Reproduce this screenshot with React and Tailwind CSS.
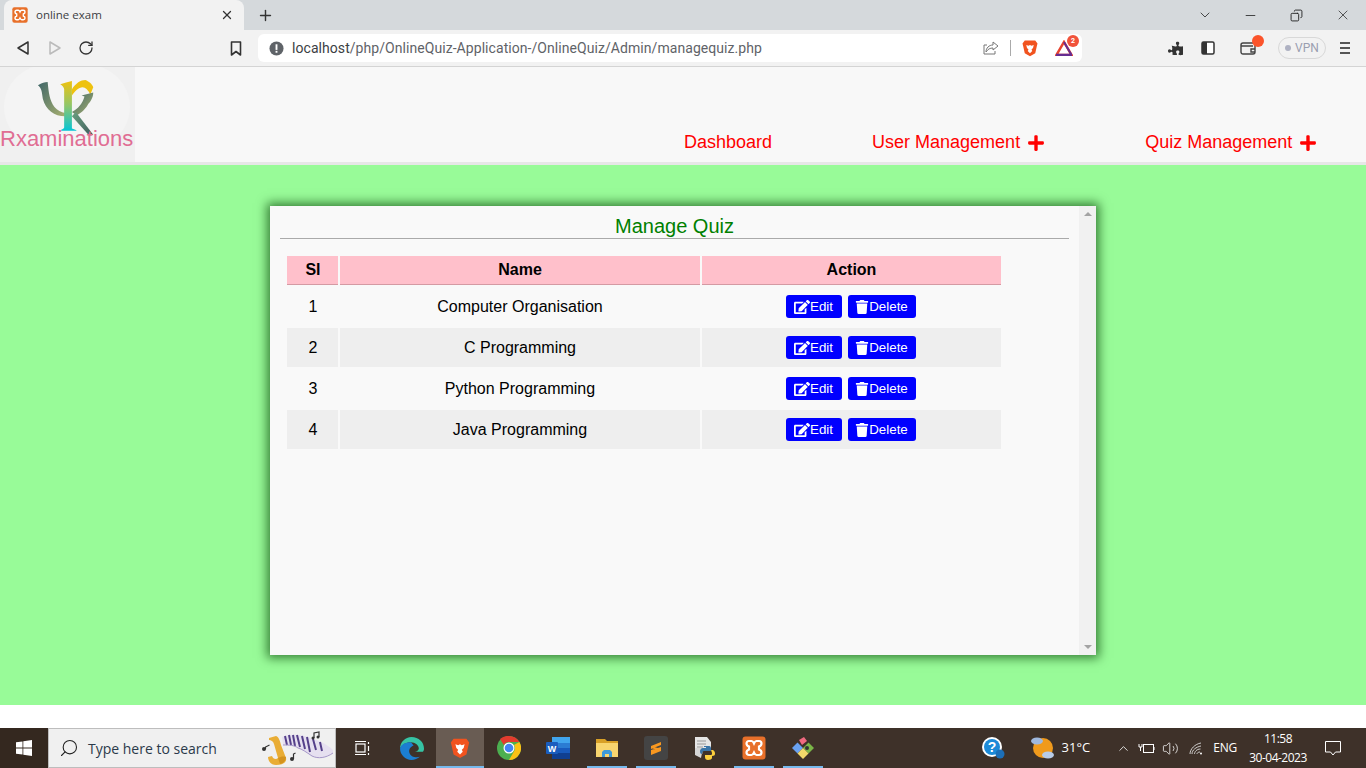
import { ChevronDown, ChevronUp, Copy, Minus, Plus, RotateCw, Search, Volume2, X } from 'lucide-react'
import { FaEdit, FaPlus, FaPuzzlePiece, FaTrash } from 'react-icons/fa'

const quizzes = ['Computer Organisation', 'C Programming', 'Python Programming', 'Java Programming']

function XamppIcon({ size = 16 }) {
  return (
    <svg width={size} height={size} viewBox="0 0 24 24">
      <rect x="0.5" y="0.5" width="23" height="23" rx="3" fill="#e8702a" />
      <path d="M7 5h2.5c1.5 0 2 1.5 2.5 2.5C12.500 6.500 13 5 14.500 5H17c1.500 0 2.500 1 2.500 2.500S18.500 10 17 10.500v3c1.500.5 2.500 1.500 2.500 3S18.500 19 17 19h-2.500c-1.500 0-2-1.500-2.500-2.500-.5 1-1 2.500-2.500 2.500H7c-1.500 0-2.500-1-2.500-2.500s1-2.500 2.500-3v-3C5.500 10 4.500 9 4.500 7.500S5.500 5 7 5z" fill="none" stroke="#fff" strokeWidth="2.200" />
    </svg>
  )
}

function BraveIcon({ size = 18 }) {
  return (
    <svg width={size} height={size} viewBox="0 0 24 24">
      <path d="M5 2h14l3 4-1 4-2 9-7 4-7-4-2-9-1-4z" fill="#f1531f" />
      <path d="M7 8l3 1 2-1 2 1 3-1-1 4-2 2 1 2-3 3-3-3 1-2-2-2z" fill="#fff" />
    </svg>
  )
}

function LogoMark() {
  return (
    <svg width="64" height="62" viewBox="0 0 66 60" preserveAspectRatio="none" className="block">
      <defs>
        <linearGradient id="logoLeft" x1="0" y1="0" x2="1" y2="1">
          <stop offset="0" stopColor="#3f6668" />
          <stop offset="1" stopColor="#a8b070" />
        </linearGradient>
        <linearGradient id="logoStem" x1="0" y1="0" x2="0" y2="1">
          <stop offset="0" stopColor="#eec20f" />
          <stop offset="0.5" stopColor="#8ec66c" />
          <stop offset="1" stopColor="#05c4d6" />
        </linearGradient>
        <linearGradient id="logoLeg" x1="0" y1="0" x2="1" y2="1">
          <stop offset="0" stopColor="#6aa080" />
          <stop offset="1" stopColor="#3f5c5c" />
        </linearGradient>
      </defs>
      <path d="M1 6c4-2 7-3 10-3 1 10 2 18 7 24 3 3 7 5 11 6v3C18 36 9 30 6 19 5 13 5 9 1 6z" fill="url(#logoLeft)" />
      <path d="M24 5c4-1 8-2 12-3v46c2 1 4 1 5 2H23c3-1 5-2 5-3V10c0-2-2-4-4-5z" fill="url(#logoStem)" />
      <path d="M36 10c4-6 9-9 14-9 3 1 7 4 8 7l-3 7c-2-4-5-7-8-7-4 0-8 4-11 8z" fill="#eec20f" />
      <path d="M36 32c6-3 11-8 13-15l-3-1 12-3c0 5-3 9-5 11-2 4-7 9-12 11z" fill="url(#logoLeft)" />
      <path d="M36 36l4-4 18 22-4 1z" fill="url(#logoLeg)" />
    </svg>
  )
}

function SearchArt() {
  return (
    <svg width="78" height="38" viewBox="0 0 78 38" className="ml-auto mr-[1px]">
      {/* piano */}
      <path d="M26 8C32 5 44 5 52 8C60 11 70 14 77 21L77 24C70 29 62 30 56 27C50 23 46 20 42 19C36 16 32 16 27 16Z" fill="#e6e0f0" />
      <path d="M29 7l2 9M33 6l2 10M37 6l2 11M41 6l3 12M46 7l3 13M51 8l3 15M57 10l3 11M64 13l2 9" stroke="#55408a" strokeWidth="2" />
      <path d="M27 16C33 16 38 16 42 19C46 20 50 23 56 27C62 30 70 29 77 24" fill="none" stroke="#a596c8" strokeWidth="1" />
      {/* sax */}
      <path d="M13 9L20 7C23 8 24 12 25 16L30 29C31 33 27 36 20 36C15 36 12 32 12 28L16 27C17 30 20 31 22 29L18 15C17 12 15 11 13 11Z" fill="#e9ad35" />
      <path d="M22 29c2-1 5-2 8-1 0 3-2 6-6 7z" fill="#d4931f" />
      {/* notes */}
      <circle cx="8" cy="20" r="2" fill="#333" />
      <path d="M9.500 20v-2l4-2" stroke="#333" strokeWidth="1.200" fill="none" />
      <circle cx="36" cy="30" r="2" fill="#333" />
      <path d="M37.500 30v-5l2-1" stroke="#333" strokeWidth="1.200" fill="none" />
      <circle cx="57" cy="9" r="1.500" fill="#333" />
      <circle cx="62" cy="8" r="1.500" fill="#333" />
      <path d="M58 9V4l5-1v5" stroke="#333" strokeWidth="1.200" fill="none" />
    </svg>
  )
}

function ToolbarBar() {
  return (
    <div className="h-[37px] bg-[#f2f2f2] border-b border-[#d4d4d4] flex items-center text-[#3c4043]">
      <svg width="14" height="16" viewBox="0 0 14 16" className="ml-[16px]" fill="none" stroke="#333" strokeWidth="1.500">
        <path d="M12 2v12L2 8z" strokeLinejoin="round" />
      </svg>
      <svg width="14" height="16" viewBox="0 0 14 16" className="ml-[18px]" fill="none" stroke="#bbb" strokeWidth="1.500">
        <path d="M2 2v12l10-6z" strokeLinejoin="round" />
      </svg>
      <RotateCw size={16} strokeWidth={1.900} className="ml-[16px] text-[#333]" />
      <svg width="12" height="15" viewBox="0 0 12 15" className="ml-[136px]" fill="none" stroke="#333" strokeWidth="1.600">
        <path d="M1.500 1h9v13L6 10.500 1.500 14z" strokeLinejoin="round" />
      </svg>
      <div className="ml-[16px] w-[824px] h-[28px] bg-white rounded-md flex items-center pl-[11px] pr-[7px]">
        <svg width="15" height="15" viewBox="0 0 16 16">
          <circle cx="8" cy="8" r="7.500" fill="#5f6368" />
          <rect x="7" y="3.500" width="2" height="6" fill="#fff" />
          <rect x="7" y="10.500" width="2" height="2" fill="#fff" />
        </svg>
        <div className="ml-[8px] text-[14px] tracking-[0.06px] font-['Roboto',sans-serif] text-[#5f6368] leading-none">
          <span className="text-[#3c4043]">localhost</span>/php/OnlineQuiz-Application-/OnlineQuiz/Admin/managequiz.php
        </div>
        <div className="flex-1" />
        <svg width="16" height="14" viewBox="0 0 16 14" fill="none" stroke="#777" strokeWidth="1">
          <path d="M10 1l5 4-5 4V7C7 7 5 8 3 11c0-4 3-7 7-7zM12 10v3H1V4h3" />
        </svg>
        <div className="w-px h-[16px] bg-[#aaa] ml-[11px]" />
        <div className="ml-[10px]"><BraveIcon size={18} /></div>
        <div className="relative ml-[16px] mr-[2px] w-[18px] h-[16px]">
          <svg width="18" height="16" viewBox="0 0 18 16">
            <path d="M9 2l7.500 13h-15z" fill="#fff" stroke="#e8432e" strokeWidth="2.500" />
            <path d="M1 15h16" stroke="#662d91" strokeWidth="2.500" />
            <path d="M9 2l7.500 13" stroke="#662d91" strokeWidth="2" />
          </svg>
          <span className="absolute -top-[5px] -right-[6px] w-[12px] h-[12px] rounded-full bg-[#f1533b] text-white text-[7px] font-bold leading-[12px] text-center font-['Roboto',sans-serif]">2</span>
        </div>
      </div>
      <FaPuzzlePiece size={15} className="ml-[86px] text-[#333] -scale-x-100" />
      <svg width="14" height="14" viewBox="0 0 14 14" className="ml-[18px]">
        <rect x="1" y="1" width="12" height="12" rx="1.500" fill="#fff" stroke="#333" strokeWidth="1.500" />
        <rect x="1" y="1" width="5" height="12" fill="#333" />
      </svg>
      <div className="relative ml-[25px] w-[16px] h-[14px]">
        <svg width="16" height="14" viewBox="0 0 16 14" fill="none" stroke="#444" strokeWidth="1.400">
          <rect x="1" y="2" width="14" height="11" rx="2" />
          <path d="M1 5h12M15 8h-4v3h4" />
        </svg>
        <span className="absolute -top-[6px] -right-[8px] w-[12px] h-[12px] rounded-full bg-[#fb542b]" />
      </div>
      <div className="ml-[22px] w-[48px] h-[22px] rounded-full border border-[#d8d8d8] flex items-center justify-center gap-[4px] text-[12px] text-[#9a9eb0] font-['Roboto',sans-serif]">
        <span className="w-[6px] h-[6px] rounded-full bg-[#aeb1c2]" />
        VPN
      </div>
      <div className="ml-[14px] w-[10px] flex flex-col gap-[3px]">
        <span className="h-[2px] bg-[#555]" />
        <span className="h-[2px] bg-[#555]" />
        <span className="h-[2px] bg-[#555]" />
      </div>
    </div>
  )
}

function BrowserChrome() {
  return (
    <div>
      <div className="h-[30px] bg-[#d5d9dc] flex items-end font-['Open_Sans',sans-serif]">
        <div className="ml-[4px] w-[240px] h-[30px] bg-[#f2f2f2] rounded-t-lg flex items-center pl-[8px] pr-[10px]">
          <XamppIcon size={16} />
          <span className="ml-[8px] text-[11.500px] text-[#3c4043] flex-1">online exam</span>
          <X size={14} strokeWidth={2.200} className="text-[#333]" />
        </div>
        <div className="ml-[13px] h-[30px] flex items-center">
          <Plus size={17} strokeWidth={2} className="text-[#333]" />
        </div>
        <div className="flex-1" />
        <div className="h-[30px] flex items-center text-[#222] pr-[15px]">
          <ChevronDown size={16} strokeWidth={1.200} />
          <Minus size={15} strokeWidth={1.300} className="ml-[30px]" />
          <Copy size={13} strokeWidth={1.700} className="ml-[32px] -scale-x-100" />
          <X size={16} strokeWidth={1.100} className="ml-[32px]" />
        </div>
      </div>
      <ToolbarBar />
    </div>
  )
}

function SiteHeader() {
  return (
    <div className="h-[98px] bg-[#f8f8f8] border-b-[3px] border-[#e7e7e7] flex items-start font-['Liberation_Sans',sans-serif]">
      <div className="w-[135px] h-[95px] bg-[#f0f0f0] overflow-hidden">
        <div className="ml-[4px] -mt-[2px] w-[126px] h-[84px] rounded-full bg-[#f4f4f4] flex justify-center pt-[14px]">
          <div className="ml-[3px]"><LogoMark /></div>
        </div>
        <div className="-mt-[22px] text-[22px] text-[#e06d93] leading-[24px] whitespace-nowrap relative">Rxaminations</div>
      </div>
      <div className="flex-1 h-[95px] flex items-end text-[18px] text-[#ff0000] pb-[9px] leading-[21px]">
        <span className="ml-[549px]">Dashboard</span>
        <span className="ml-[100px]">User Management</span>
        <FaPlus size={18} className="ml-[7px] mb-[1px]" />
        <span className="ml-[100px]">Quiz Management</span>
        <FaPlus size={18} className="ml-[7px] mb-[1px]" />
      </div>
    </div>
  )
}

function ActionButton({ icon, label, width }) {
  return (
    <button className={`${width} h-[23px] bg-[#0000ff] text-white text-[13.33px] rounded-[3px] flex items-center justify-center leading-none`}>
      {icon}
      {label}
    </button>
  )
}

function QuizCard() {
  return (
    <div className="w-[826px] h-[449px] bg-[#f9f9f9] shadow-[0_0_10px_3px_rgba(0,60,0,0.65)] flex">
      <div className="flex-1 px-[10px] pt-[7px]">
        <h2 className="text-[20px] leading-[27px] text-[#008000] text-center border-b border-[#aaaaaa] h-[26px] mx-0">Manage Quiz</h2>
        <table className="ml-[5px] mt-[15px] w-[718px] border-separate border-spacing-[2px] text-[16px] text-black table-fixed">
          <thead>
            <tr className="h-[29px] bg-[#ffc0cb] font-bold">
              <th className="w-[51px] border-b border-[#d49aa3] font-bold pl-px">Sl</th>
              <th className="w-[360px] border-b border-[#d49aa3] font-bold">Name</th>
              <th className="border-b border-[#d49aa3] font-bold">Action</th>
            </tr>
          </thead>
          <tbody>
            {quizzes.map((name, i) => (
              <tr key={name} className={i % 2 === 1 ? 'h-[39px] bg-[#eeeeee]' : 'h-[39px]'}>
                <td className="text-center pl-px">{i + 1}</td>
                <td className="text-center">{name}</td>
                <td>
                  <div className="flex justify-center gap-[6px] pr-[2px]">
                    <ActionButton icon={<FaEdit size={16} />} label="Edit" width="w-[56px]" />
                    <ActionButton icon={<FaTrash size={14} />} label="Delete" width="w-[68px]" />
                  </div>
                </td>
              </tr>
            ))}
          </tbody>
        </table>
      </div>
      {/* scrollbar */}
      <div className="w-[17px] bg-[#f1f1f1] flex flex-col items-center justify-between py-[6px]">
        <div className="w-0 h-0 border-x-[4px] border-x-transparent border-b-[4px] border-b-[#a3a3a3]" />
        <div className="w-0 h-0 border-x-[4px] border-x-transparent border-t-[4px] border-t-[#a3a3a3]" />
      </div>
    </div>
  )
}

function TaskItem({ children, active, underline }) {
  return (
    <div className={`relative w-[48px] mr-px h-[40px] flex items-center justify-center ${active ? 'bg-[#695c53]' : ''}`}>
      {children}
      {underline && <span className={`absolute bottom-0 h-[2px] bg-[#76b9ed] ${active ? 'left-0 right-0' : 'left-[4px] w-[40px]'}`} />}
    </div>
  )
}

function Taskbar() {
  return (
    <div className="h-[40px] bg-[#3e3129] flex items-center text-white font-['Open_Sans',sans-serif]">
      <div className="w-[48px] h-[40px] bg-[#34281f] flex items-center justify-center">
        <svg width="16" height="16" viewBox="0 0 16 16" fill="#fff">
          <path d="M0 2.300l6.500-.9v6.200H0zM7.300 1.300L16 0v7.600H7.300zM0 8.400h6.500v6.200L0 13.700zM7.300 8.400H16V16l-8.700-1.300z" />
        </svg>
      </div>
      <div className="w-[288px] h-[40px] bg-[#f0f0f0] border border-[#bdbdbd] flex items-center pl-[10px] text-[#2b3a4a] overflow-hidden">
        <Search size={20} strokeWidth={1.300} className="-scale-x-100 text-[#222]" />
        <span className="ml-[9px] text-[14px]">Type here to search</span>
        <SearchArt />
      </div>
      <div className="w-[2px]" />
      <TaskItem>
        <svg width="16" height="16" viewBox="0 0 16 16" fill="none" stroke="#fff" strokeWidth="1.200">
          <rect x="2" y="4" width="9" height="8" />
          <path d="M1 1.500h11M1 14.500h11M14.500 2v2M14.500 6v5M14.500 13v2" />
        </svg>
      </TaskItem>
      <TaskItem>
        <svg width="25" height="25" viewBox="0 0 24 24">
          <path d="M12 1C6 1 1 6 1 12c2-4 6-6 10-6 5 0 8 3 8 6 0 2-2 3-4 3h8c1-1 1-2 1-3 0-6-5-11-12-11z" fill="#36c3a4" />
          <path d="M1 12c0 6 5 11 11 11 3 0 6-1 8-3-4 1-9 0-10-4-1-3 1-6 4-7-1-1-2-3-3-3-5 0-9 2-10 6z" fill="#1b7ed2" />
        </svg>
      </TaskItem>
      <TaskItem active underline><BraveIcon size={22} /></TaskItem>
      <TaskItem>
        <svg width="24" height="24" viewBox="0 0 24 24">
          <circle cx="12" cy="12" r="12" fill="#4caf50" />
          <path d="M12 0a12 12 0 0 1 10.400 6H12a6 6 0 0 0-5.200 3L3 3a12 12 0 0 1 9-3z" fill="#e33b2e" />
          <path d="M22.400 6A12 12 0 0 1 12 24l5.200-9A6 6 0 0 0 18 12a6 6 0 0 0-1-3z" fill="#fbc116" />
          <circle cx="12" cy="12" r="5.500" fill="#fff" />
          <circle cx="12" cy="12" r="4.300" fill="#4285f4" />
        </svg>
      </TaskItem>
      <TaskItem>
        <svg width="24" height="22" viewBox="0 0 24 22">
          <rect x="6" y="0" width="18" height="6" fill="#41a5ee" />
          <rect x="6" y="6" width="18" height="5" fill="#2b7cd3" />
          <rect x="6" y="11" width="18" height="5" fill="#185abd" />
          <rect x="6" y="16" width="18" height="6" fill="#103f91" />
          <rect x="0" y="5" width="12" height="12" rx="1" fill="#1a5dbe" />
          <text x="6" y="14.500" textAnchor="middle" fontSize="9" fontWeight="700" fill="#fff" fontFamily="Liberation Sans">W</text>
        </svg>
      </TaskItem>
      <TaskItem underline>
        <svg width="22" height="18" viewBox="0 0 22 18">
          <path d="M0 0h9l2 2h11v16H0z" fill="#d8a027" />
          <rect x="0" y="4" width="22" height="14" fill="#f8d56f" />
          <path d="M6 18v-5l2-2h6l2 2v5h-3v-3H9v3z" fill="#3d9ad9" />
        </svg>
      </TaskItem>
      <TaskItem underline>
        <div className="w-[24px] h-[24px] rounded-[3px] bg-[#444444] flex items-center justify-center">
          <svg width="12" height="16" viewBox="0 0 12 16" fill="#f89820">
            <path d="M1 6l10-4v3L1 9zM1 10l10-3v4L1 15zM1 6l10 3v2L1 8z" />
          </svg>
        </div>
      </TaskItem>
      <TaskItem>
        <svg width="24" height="24" viewBox="0 0 24 24">
          <path d="M2 1h12l4 5v6H2z" fill="#e5e5e5" />
          <path d="M4 5h9M4 8h9M4 11h6M4 14h6M4 17h6" stroke="#999" strokeWidth="1" />
          <path d="M2 12v7l6 3 2-10z" fill="#d5d5d5" />
          <path d="M11 10h5c2 0 2 2 2 3v2h-7c-1 0-2 1-2 3-2 0-2-2-2-3s1-3 3-3h3v-1h-2z" fill="#3a75a8" />
          <path d="M18 14h2c2 1 2 3 2 4s-1 2-3 2v2c0 1-2 2-4 2s-3-1-3-3v-2h6c1 0 1-1 1-2z" fill="#fbcf3d" />
        </svg>
      </TaskItem>
      <TaskItem underline><XamppIcon size={24} /></TaskItem>
      <TaskItem underline>
        <svg width="24" height="24" viewBox="0 0 24 24">
          <path d="M1 12l5.500-5.500L12 12l-5.500 5.500z" fill="#6aa2f2" />
          <path d="M12 12l5.500-5.500L23 12l-5.500 5.500z" fill="#7ab648" />
          <path d="M6.500 17.500L12 12l5.500 5.500L12 23z" fill="#f2d96b" />
          <path d="M8 4l5-3 3 4-5 4z" fill="#f06a80" />
          <circle cx="16" cy="12" r="2" fill="#333" />
        </svg>
      </TaskItem>
      <div className="flex-1" />
      <svg width="24" height="24" viewBox="0 0 24 24" className="mr-[25px]">
        <circle cx="11" cy="11" r="10" fill="#fff" />
        <circle cx="11" cy="11" r="8" fill="#1c8ad8" />
        <text x="11" y="16" textAnchor="middle" fontSize="14" fontWeight="700" fill="#fff" fontFamily="Liberation Sans">?</text>
        <circle cx="19" cy="18" r="4.500" fill="#1c6fb8" />
      </svg>
      <svg width="26" height="24" viewBox="0 0 26 24">
        <circle cx="13" cy="12" r="10" fill="#f09a1c" />
        <ellipse cx="7" cy="5" rx="6" ry="3.500" fill="#9fb8de" />
        <ellipse cx="18" cy="19" rx="6" ry="3.500" fill="#b8cbe8" />
      </svg>
      <span className="ml-[6px] text-[13px]">31°C</span>
      <ChevronUp size={15} strokeWidth={1.300} className="ml-[26px]" />
      <svg width="17" height="12" viewBox="0 0 17 12" className="ml-[7px]" fill="none" stroke="#fff" strokeWidth="1">
        <rect x="5.500" y="2.500" width="10" height="8" />
        <path d="M16 5v3M1 2v3h3V2M2.500 5v4M1 1.500v0M4 1.500v0" />
      </svg>
      <Volume2 size={17} strokeWidth={1.100} className="ml-[7px]" />
      <svg width="14" height="13" viewBox="0 0 14 13" className="ml-[10px]" fill="none" stroke="#ddd" strokeWidth="0.900">
        <path d="M1 12C1 7 6 2 12 1M3 12c0-4 4-7 9-8M5.500 12c0-2 2-5 6-5M8 12c0-1 1-2 3-2" />
        <circle cx="12" cy="11.500" r="1" fill="#fff" stroke="none" />
      </svg>
      <span className="ml-[10px] text-[12px] tracking-[-0.2px]">ENG</span>
      <div className="ml-[11px] w-[60px] text-center text-[12px] leading-[19px] tracking-[-0.5px]">
        <div>11:58</div>
        <div className="whitespace-nowrap">30-04-2023</div>
      </div>
      <svg width="16" height="15" viewBox="0 0 16 15" className="ml-[17px] mr-[25px]" fill="none" stroke="#fff" strokeWidth="1">
        <path d="M.5.500h15v10.500h-5l-2.500 3-2.500-3h-5z" />
      </svg>
    </div>
  )
}

export default function App() {
  return (
    <div className="w-[1366px] h-[768px] overflow-hidden flex flex-col bg-white font-['Liberation_Sans',sans-serif]">
      <BrowserChrome />
      <SiteHeader />
      <div className="h-[540px] bg-[#98fb98] pt-[41px] pl-[270px]">
        <QuizCard />
      </div>
      <div className="h-[23px] bg-white" />
      <Taskbar />
    </div>
  )
}
